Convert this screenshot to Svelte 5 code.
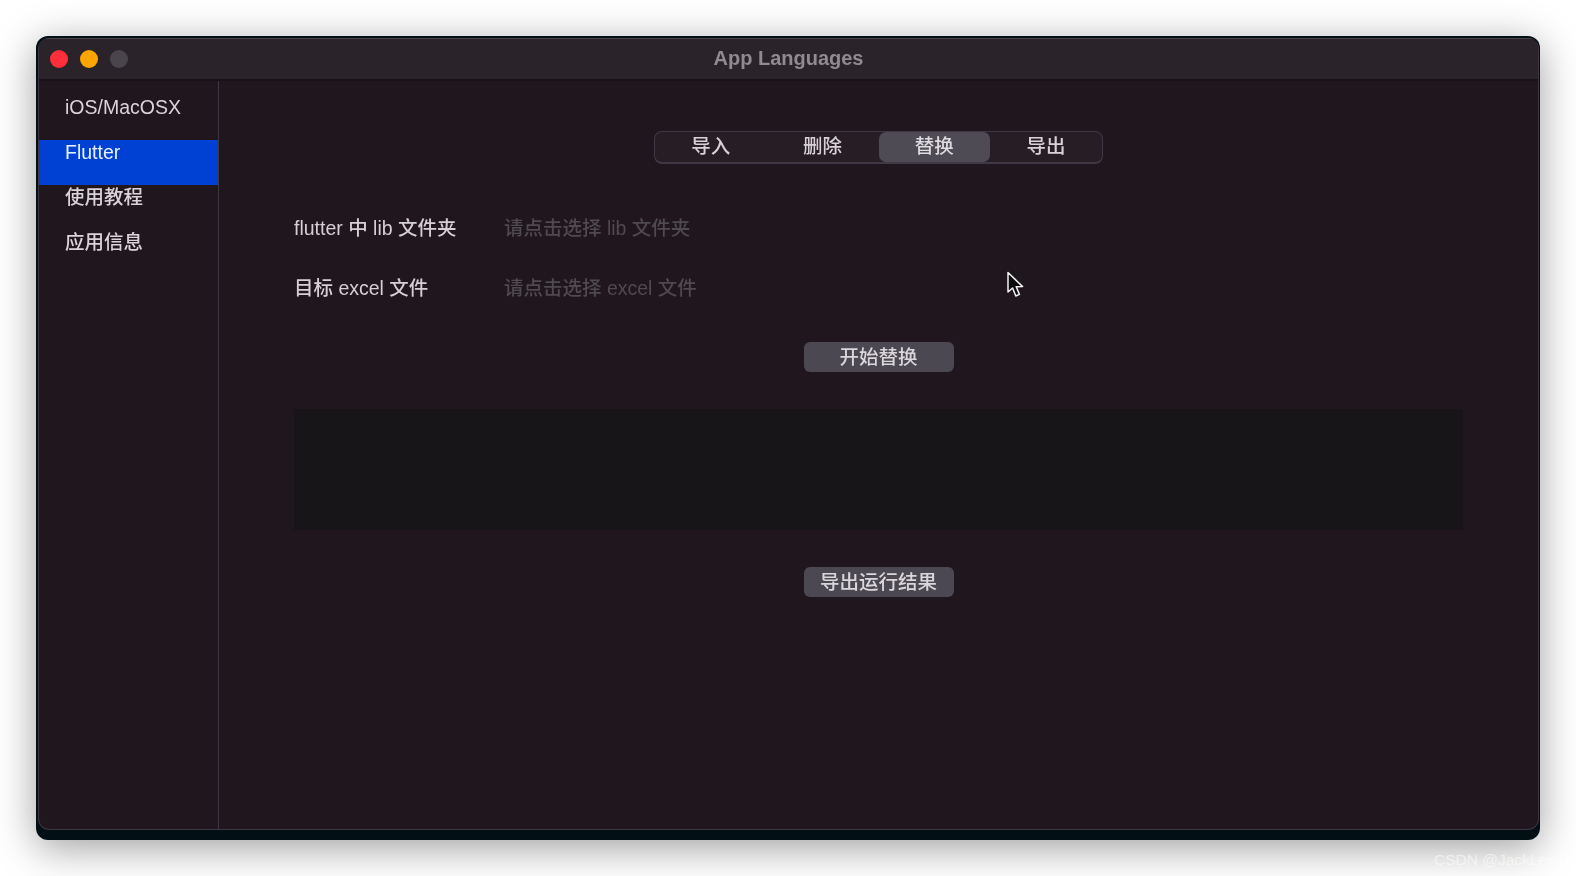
<script>
  const nav = ['iOS/MacOSX', 'Flutter', '使用教程', '应用信息'];
  const tabs = ['导入', '删除', '替换', '导出'];
  let current = 'Flutter';
  let tab = '替换';
</script>

<div class="page">
  <div class="frame">
    <div class="window">
      <header class="titlebar">
        <div class="lights">
          <span class="light red"></span>
          <span class="light yellow"></span>
          <span class="light grey"></span>
        </div>
        <div class="title">App Languages</div>
      </header>
      <div class="body">
        <aside class="sidebar">
          {#each nav as item}
            <div class="nav-item" class:active={item === current}>{item}</div>
          {/each}
        </aside>
        <main class="content">
          <div class="segmented">
            {#each tabs as t}
              <div class="seg" class:selected={t === tab}>{t}</div>
            {/each}
          </div>
          <div class="row first">
            <span class="label">flutter 中 lib 文件夹</span>
            <span class="hint">请点击选择 lib 文件夹</span>
          </div>
          <div class="row">
            <span class="label">目标 excel 文件</span>
            <span class="hint">请点击选择 excel 文件</span>
          </div>
          <button class="btn start">开始替换</button>
          <div class="output"></div>
          <button class="btn">导出运行结果</button>
        </main>
      </div>
    </div>
  </div>

  <svg class="cursor" width="20" height="28" viewBox="0 0 20 28">
    <path d="M2 1.5 L2 21 L6.6 17 L9.8 25 L13.4 23.4 L10.2 15.8 L16.6 15.6 Z" fill="#0c0a0e" stroke="#f2f2f2" stroke-width="1.5" stroke-linejoin="round" />
  </svg>
  <div class="watermark">CSDN @JackLee18</div>
</div>

<style>
  :global(body) {
    margin: 0;
    background: #fff;
  }

  .page {
    position: relative;
    width: 1576px;
    height: 876px;
    padding: 36px;
    box-sizing: border-box;
    overflow: hidden;
    background: #fff;
    font-family: "Liberation Sans", "Noto Sans CJK SC", sans-serif;
  }

  .frame {
    height: 100%;
    padding: 2px 1px 10px 2px;
    box-sizing: border-box;
    background: #021015;
    border-radius: 12px;
    box-shadow: 0 8px 40px rgba(0, 0, 0, 0.38);
  }

  .window {
    height: 100%;
    display: flex;
    flex-direction: column;
    box-sizing: border-box;
    background: #20161d;
    border: 1px solid #3e3640;
    border-top: none;
    border-radius: 11px;
    overflow: hidden;
  }

  .titlebar {
    position: relative;
    flex: none;
    height: 43px;
    display: flex;
    align-items: center;
    justify-content: center;
    box-sizing: border-box;
    padding-bottom: 1px;
    background: #2a2329;
    border-top: 1px solid #4a444b;
    border-bottom: 2px solid #17121a;
  }

  .lights {
    position: absolute;
    left: 11px;
    top: 11px;
    display: flex;
    gap: 12px;
  }

  .light {
    width: 18px;
    height: 18px;
    border-radius: 50%;
  }

  .red { background: #fe2f3a; }
  .yellow { background: #fea500; }
  .grey { background: #4a454c; }

  .title {
    color: #8f8b8f;
    font-size: 20px;
    font-weight: 700;
    filter: blur(0.4px);
  }

  .body {
    flex: 1;
    display: flex;
    min-height: 0;
  }

  .sidebar {
    flex: none;
    width: 180px;
    padding-top: 14px;
    box-sizing: border-box;
    border-right: 1px solid #3e3640;
  }

  .nav-item {
    height: 45px;
    box-sizing: border-box;
    padding-left: 26px;
    line-height: 25px;
    color: #d8d4d8;
    font-size: 19.5px;
    font-weight: 500;
    white-space: nowrap;
  }

  .nav-item.active {
    background: #0040d2;
    color: #e8f2ff;
  }

  .content {
    flex: 1;
    display: flex;
    flex-direction: column;
    align-items: center;
    min-width: 0;
    padding: 50px 75px 0 75px;
  }

  .segmented {
    flex: none;
    width: 449px;
    height: 33px;
    display: flex;
    align-items: flex-start;
    box-sizing: border-box;
    border: 1px solid #3f3945;
    border-bottom-width: 2px;
    border-radius: 8px;
    background: #261d25;
  }

  .seg {
    flex: 1;
    height: 30px;
    line-height: 29px;
    text-align: center;
    color: #d6d2d6;
    font-size: 19.5px;
    font-weight: 500;
    border-radius: 7px;
  }

  .seg.selected {
    background: #4f4b55;
    color: #dedade;
  }

  .row {
    align-self: stretch;
    display: flex;
    align-items: center;
    height: 60px;
    font-size: 19.5px;
    font-weight: 500;
    white-space: nowrap;
  }

  .row.first {
    margin-top: 32px;
  }

  .label {
    width: 210px;
    color: #d4d0d4;
  }

  .hint {
    color: #4e4a50;
  }

  .btn {
    flex: none;
    width: 150px;
    height: 30px;
    padding: 0;
    border: none;
    border-radius: 6px;
    background: #4b4851;
    color: #dad6da;
    font-family: inherit;
    font-size: 19.5px;
    font-weight: 500;
    line-height: 28px;
  }

  .btn.start {
    margin-top: 26px;
  }

  .output {
    flex: none;
    align-self: stretch;
    height: 121px;
    margin: 37px 0;
    background: #171517;
  }

  .cursor {
    position: absolute;
    left: 1006px;
    top: 271px;
  }

  .watermark {
    position: absolute;
    left: 1434px;
    top: 851px;
    color: rgba(255, 255, 255, 0.55);
    font-size: 15.5px;
    white-space: nowrap;
  }

  .nav-item, .seg, .row, .btn {
    filter: blur(0.4px);
  }
</style>
